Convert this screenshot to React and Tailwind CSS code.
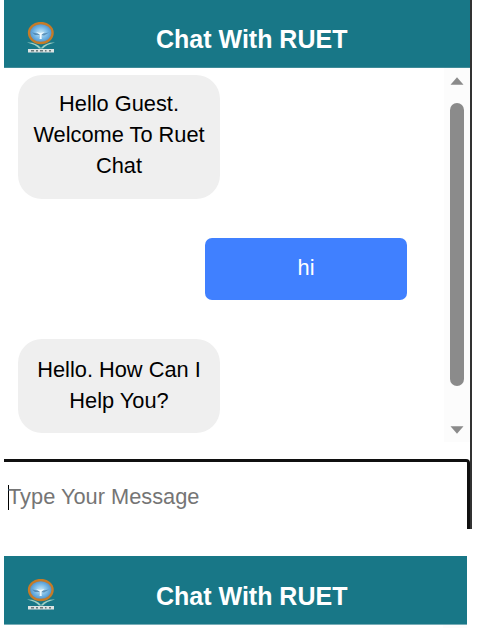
function Logo() {
  return (
    <svg className="block h-8 w-8 shrink-0" viewBox="0 0 32 32">
      <defs>
        <radialGradient id="globe" cx="50%" cy="50%" r="55%">
          <stop offset="0" stopColor="#c9e8f7" />
          <stop offset="0.5" stopColor="#79b9e6" />
          <stop offset="1" stopColor="#3d83c4" />
        </radialGradient>
      </defs>
      <path d="M3 20.5Q12 20 17 26Q22 20 31 20.5Q22 22.5 19 26.5H15Q12 22.5 3 20.5Z" fill="#9fd0c4" />
      <ellipse cx="16.8" cy="11" rx="11.8" ry="10" fill="url(#globe)" stroke="#c67b27" strokeWidth="2.3" />
      <path d="M8 10.5L16.5 12L25 10.5L20 13.5L17.5 13V16H15.5V13L11 13Z" fill="#3c709c" opacity="0.65" />
      <path d="M12 10L16.5 11L20.5 10L17.7 12.5V17H15.6V12.5Z" fill="#eefaff" />
      <path d="M4 27H30V30.5H4Z" fill="#dce3e2" />
      <path d="M7 28.8H10M12 28.8H14M16 28.8H19M21 28.8H22.5M25 28.8H27" stroke="#68797a" strokeWidth="1.6" />
    </svg>
  );
}

function Header({ className }) {
  return (
    <header className={"flex shrink-0 items-start bg-[#187787] pl-5 " + className}>
      <div className="pt-[22px]">
        <Logo />
      </div>
      <h1 className="ml-[100px] mt-[23px] whitespace-nowrap text-[25px] leading-8 font-bold text-white">
        Chat With RUET
      </h1>
    </header>
  );
}

function BotMessage({ children, className }) {
  return (
    <div className={"w-[202px] rounded-[24px] bg-[#efefef] text-center text-black " + className}>
      {children}
    </div>
  );
}

function Scrollbar() {
  return (
    <div className="flex w-[26px] shrink-0 flex-col items-center bg-[#fcfcfc]">
      <svg className="mt-[9px] block h-2 w-[14px] shrink-0" viewBox="0 0 14 8">
        <path d="M7 0.3L13.5 7.7H0.5Z" fill="#8b8b8b" />
      </svg>
      <div className="mt-[18px] h-[283px] w-[14px] shrink-0 rounded-full bg-[#8b8b8b]" />
      <svg className="mt-10 block h-2 w-[14px] shrink-0" viewBox="0 0 14 8">
        <path d="M0.5 0.3H13.5L7 7.7Z" fill="#8b8b8b" />
      </svg>
    </div>
  );
}

export default function App() {
  return (
    <div className="flex h-[628px] w-[487px] flex-col overflow-hidden bg-white pl-1 font-['Liberation_Sans',Arial,sans-serif] text-[21.8px] leading-[31px]">
      <section className="flex h-[529px] w-[468px] shrink-0 flex-col border-r-2 border-[#333333]">
        <Header className="h-[68px] border-b border-[#3f8b98]" />
        <div className="flex h-[374px] shrink-0">
          <div className="flex grow flex-col pl-[14px] pt-[7px]">
            <BotMessage className="h-[124px] pt-[13px]">
              Hello Guest.
              <br />
              Welcome To Ruet
              <br />
              Chat
            </BotMessage>
            <div className="ml-[187px] mt-[39px] h-[62px] w-[202px] rounded-[7px] bg-[#4080ff] pt-[14px] text-center text-white">
              hi
            </div>
            <BotMessage className="mt-[39px] h-[94px] pt-[15px]">
              Hello. How Can I
              <br />
              Help You?
            </BotMessage>
          </div>
          <Scrollbar />
        </div>
        <div className="mt-[17px] flex grow items-start rounded-tr-[4px] border-t-[3px] border-r-[3px] border-[#101010] pl-1 pt-[23px]">
          <div className="h-[25px] w-px bg-black" />
          <span className="-ml-px -mt-1 text-[#757575]">Type Your Message</span>
        </div>
      </section>
      <Header className="mt-[27px] h-[69px] w-[463px] border-t border-b border-t-[#187787] border-b-[#78adb7]" />
      <div className="ml-[439px] h-[3px] w-6 bg-[#fcfcfc]" />
    </div>
  );
}
